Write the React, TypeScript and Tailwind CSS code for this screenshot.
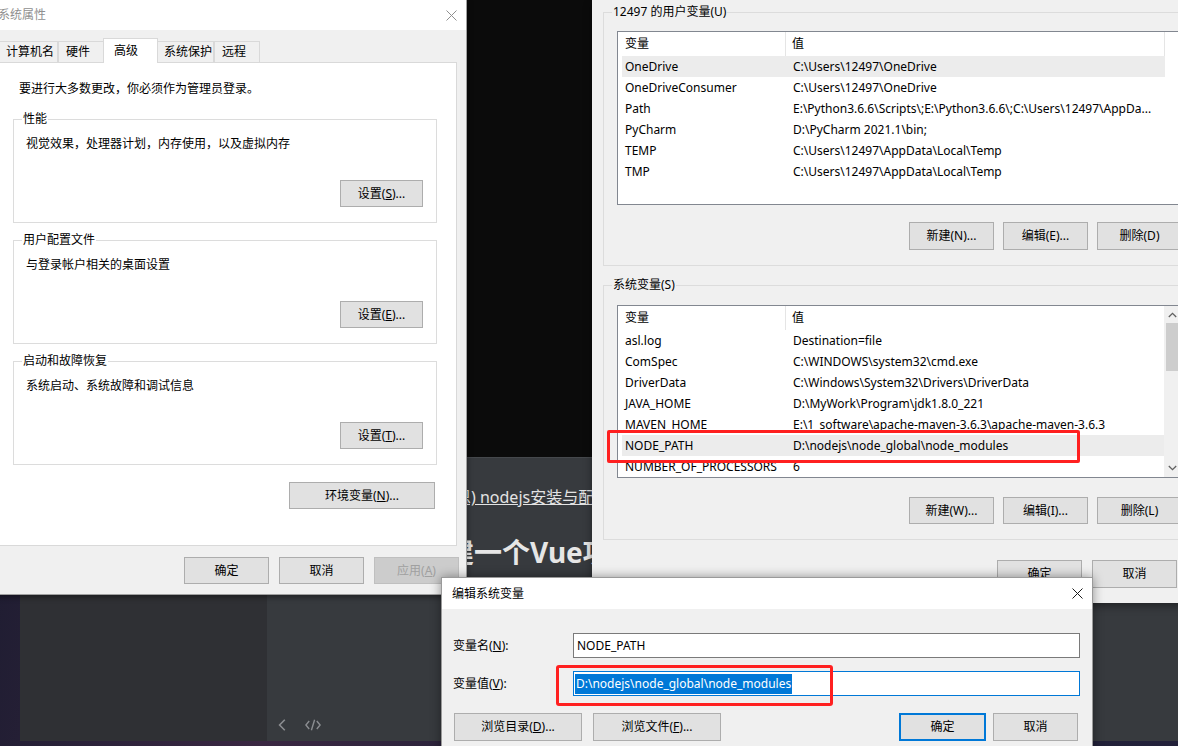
import type { ReactNode } from 'react';

const userVars: [string, string][] = [
  ['OneDrive', 'C:\\Users\\12497\\OneDrive'],
  ['OneDriveConsumer', 'C:\\Users\\12497\\OneDrive'],
  ['Path', 'E:\\Python3.6.6\\Scripts\\;E:\\Python3.6.6\\;C:\\Users\\12497\\AppDa...'],
  ['PyCharm', 'D:\\PyCharm 2021.1\\bin;'],
  ['TEMP', 'C:\\Users\\12497\\AppData\\Local\\Temp'],
  ['TMP', 'C:\\Users\\12497\\AppData\\Local\\Temp'],
];

const systemVars: [string, string][] = [
  ['asl.log', 'Destination=file'],
  ['ComSpec', 'C:\\WINDOWS\\system32\\cmd.exe'],
  ['DriverData', 'C:\\Windows\\System32\\Drivers\\DriverData'],
  ['JAVA_HOME', 'D:\\MyWork\\Program\\jdk1.8.0_221'],
  ['MAVEN_HOME', 'E:\\1_software\\apache-maven-3.6.3\\apache-maven-3.6.3'],
  ['NODE_PATH', 'D:\\nodejs\\node_global\\node_modules'],
  ['NUMBER_OF_PROCESSORS', '6'],
];

function CloseX({ color }: { color: string }) {
  return (
    <svg width="11" height="11" viewBox="0 0 11 11">
      <path d="M0.5 0.5L10.5 10.5M10.5 0.5L0.5 10.5" stroke={color} strokeWidth="1" />
    </svg>
  );
}

function Btn({
  children,
  className = '',
  variant = 'normal',
}: {
  children: ReactNode;
  className?: string;
  variant?: 'normal' | 'primary' | 'disabled';
}) {
  const look =
    variant === 'primary'
      ? 'border-2 border-[#0078d7] bg-[#e1e1e1] text-black'
      : variant === 'disabled'
        ? 'border border-[#bfbfbf] bg-[#cccccc] text-[#a0a0a0]'
        : 'border border-[#adadad] bg-[#e1e1e1] text-black';
  return (
    <div className={`flex shrink-0 items-center justify-center whitespace-nowrap ${look} ${className}`}>
      {children}
    </div>
  );
}

function GroupBox({
  label,
  labelBg,
  className = '',
  children,
}: {
  label: ReactNode;
  labelBg: string;
  className?: string;
  children?: ReactNode;
}) {
  return (
    <div className={`relative border border-[#dcdcdc] ${className}`}>
      <span className={`absolute left-[8px] top-[-9px] whitespace-nowrap px-[1px] leading-[16px] ${labelBg}`}>
        {label}
      </span>
      {children}
    </div>
  );
}

function VarList({
  rows,
  selected,
  scroll = false,
  className = '',
}: {
  rows: [string, string][];
  selected: number;
  scroll?: boolean;
  className?: string;
}) {
  return (
    <div className={`relative overflow-hidden border border-[#828790] bg-white ${className}`}>
      <div className="flex h-[24px] pl-[4px]">
        <div className="flex w-[164px] items-center border-r border-[#e5e5e5] pl-[3px]">变量</div>
        <div className="flex w-[379px] items-center border-r border-[#e5e5e5] pl-[6px]">值</div>
      </div>
      {rows.map(([name, value], i) => (
        <div
          key={name}
          className={`ml-[4px] flex h-[21px] w-[543px] items-center whitespace-nowrap ${
            i === selected ? 'bg-[#ececec]' : ''
          }`}
        >
          <div className="w-[164px] shrink-0 overflow-hidden pl-[3px]">{name}</div>
          <div className="pl-[7px]">{value}</div>
        </div>
      ))}
      {scroll && (
        <div className="absolute bottom-0 right-0 top-0 flex w-[16px] flex-col items-center bg-[#f0f0f0]">
          <svg className="mt-[6px]" width="9" height="6" viewBox="0 0 9 6">
            <path d="M0.8 5L4.5 1.3 8.2 5" fill="none" stroke="#606060" strokeWidth="1.3" />
          </svg>
          <div className="mt-[5px] h-[48px] w-[13px] bg-[#cdcdcd]" />
          <svg className="mt-auto mb-[6px]" width="9" height="6" viewBox="0 0 9 6">
            <path d="M0.8 1L4.5 4.7 8.2 1" fill="none" stroke="#606060" strokeWidth="1.3" />
          </svg>
        </div>
      )}
    </div>
  );
}

function Tab({ label, width, active = false }: { label: string; width: string; active?: boolean }) {
  if (active) {
    return (
      <div
        className={`relative top-[1px] z-10 -mx-[2px] flex h-[25px] items-center border-l border-r border-t border-[#d9d9d9] bg-white pl-[10px] ${width}`}
      >
        {label}
      </div>
    );
  }
  return (
    <div
      className={`flex h-[21px] items-center border-l border-r border-t border-[#d9d9d9] bg-[#f0f0f0] pl-[7px] ${width}`}
    >
      {label}
    </div>
  );
}

function PerfGroup({ label, text, button, className = '' }: { label: string; text: string; button: ReactNode; className?: string }) {
  return (
    <GroupBox label={label} labelBg="bg-white" className={`flex h-[104px] w-[424px] flex-col pl-[12px] pt-[16px] ${className}`}>
      <div className="h-[16px]">{text}</div>
      <Btn className="mr-[13px] mt-[28px] h-[27px] w-[83px] self-end">{button}</Btn>
    </GroupBox>
  );
}

export default function App() {
  return (
    <div className="relative h-[746px] w-[1178px] overflow-hidden bg-[linear-gradient(100deg,#171a2d_0%,#3a2742_30%,#1c1f33_60%,#23213a_100%)] font-['Noto_Sans','Noto_Sans_CJK_SC',sans-serif] text-[12px] leading-[16px] text-black">
      {/* browser page behind the dialogs */}
      <div className="absolute left-[20px] top-0 flex h-[741px] w-[1158px] flex-col">
        <div className="h-[458px] shrink-0 border-b border-[#45484c] bg-[#0b0b0b]" />
        <div className="flex flex-1">
          <div className="w-[247px] bg-[#2f3034]" />
          <div className="flex flex-1 flex-col bg-[#373a3e]">
            {/* only the strip between the two dialogs is visible */}
            <div className="ml-[200px] w-[125px] overflow-hidden">
              <div className="-ml-[12px] mt-[29px] whitespace-nowrap text-[16px] leading-[20px] text-[#e3e3e3] underline">
                恩) nodejs安装与配置
              </div>
              <div className="-ml-[21px] mt-[28px] whitespace-nowrap text-[28px] font-bold leading-[34px] text-[#e6e6e6]">
                建一个Vue项目
              </div>
            </div>
            <div className="mb-[10px] ml-[11px] mt-auto flex items-center gap-[19px]">
              <svg width="8" height="12" viewBox="0 0 8 12">
                <path d="M6.8 0.8L1.6 6l5.2 5.2" fill="none" stroke="#8b8d91" strokeWidth="1.6" />
              </svg>
              <svg width="16" height="12" viewBox="0 0 16 12">
                <path d="M4.2 2L0.9 6l3.3 4M11.8 2l3.3 4-3.3 4M9.6 0.8L6.4 11.2" fill="none" stroke="#8b8d91" strokeWidth="1.4" />
              </svg>
            </div>
          </div>
        </div>
      </div>

      {/* 系统属性 */}
      <div className="absolute left-[-12px] top-0 flex h-[595px] w-[479px] flex-col border-b border-r border-[#a0a0a0] bg-[#f0f0f0] shadow-[0_2px_6px_rgba(0,0,0,0.45)]">
        <div className="flex h-[30px] shrink-0 items-center justify-between bg-white pl-[10px] pr-[9px]">
          <span className="text-[#8f8f8f]">系统属性</span>
          <CloseX color="#8f8f8f" />
        </div>
        <div className="pl-[10px] pt-[8px]">
          <div className="flex h-[24px] items-end">
            <Tab label="计算机名" width="w-[60px]" />
            <Tab label="硬件" width="w-[47px]" />
            <Tab label="高级" width="w-[55px]" active />
            <Tab label="系统保护" width="w-[58px]" />
            <Tab label="远程" width="w-[46px]" />
          </div>
          <div className="flex h-[484px] w-[459px] flex-col border border-[#d9d9d9] bg-white pl-[14px] pt-[18px]">
            <div className="ml-[6px] h-[16px]">要进行大多数更改，你必须作为管理员登录。</div>
            <PerfGroup
              className="mt-[22px]"
              label="性能"
              text="视觉效果，处理器计划，内存使用，以及虚拟内存"
              button={<>设置(<u>S</u>)...</>}
            />
            <PerfGroup
              className="mt-[17px]"
              label="用户配置文件"
              text="与登录帐户相关的桌面设置"
              button={<>设置(<u>E</u>)...</>}
            />
            <PerfGroup
              className="mt-[17px]"
              label="启动和故障恢复"
              text="系统启动、系统故障和调试信息"
              button={<>设置(<u>T</u>)...</>}
            />
            <Btn className="mr-[21px] mt-[17px] h-[27px] w-[146px] self-end">
              环境变量(<u>N</u>)...
            </Btn>
          </div>
        </div>
        <div className="mt-[11px] flex justify-end gap-[10px] pr-[7px]">
          <Btn className="h-[27px] w-[85px]">确定</Btn>
          <Btn className="h-[27px] w-[85px]">取消</Btn>
          <Btn className="h-[27px] w-[85px]" variant="disabled">
            应用(<u>A</u>)
          </Btn>
        </div>
      </div>

      {/* 环境变量 */}
      <div className="absolute left-[592px] top-0 h-[603px] w-[620px] bg-[#f0f0f0] pl-[11px] pt-[12px] shadow-[0_3px_8px_rgba(0,0,0,0.4)]">
        <GroupBox label="12497 的用户变量(U)" labelBg="bg-[#f0f0f0]" className="h-[254px] w-[600px] pl-[13px] pt-[18px]">
          <VarList rows={userVars} selected={0} className="h-[174px] w-[564px]" />
          <div className="mt-[17px] flex w-[565px] justify-end gap-[9px]">
            <Btn className="h-[28px] w-[85px]">新建(N)...</Btn>
            <Btn className="h-[28px] w-[85px]">编辑(E)...</Btn>
            <Btn className="h-[28px] w-[85px]">删除(D)</Btn>
          </div>
        </GroupBox>
        <GroupBox label="系统变量(S)" labelBg="bg-[#f0f0f0]" className="mt-[19px] h-[255px] w-[600px] pl-[13px] pt-[19px]">
          <VarList rows={systemVars} selected={5} scroll className="h-[173px] w-[564px]" />
          <div className="mt-[19px] flex w-[565px] justify-end gap-[9px]">
            <Btn className="h-[27px] w-[85px]">新建(W)...</Btn>
            <Btn className="h-[27px] w-[85px]">编辑(I)...</Btn>
            <Btn className="h-[27px] w-[85px]">删除(L)</Btn>
          </div>
        </GroupBox>
        <div className="mt-[20px] flex w-[574px] justify-end gap-[10px]">
          <Btn className="h-[28px] w-[85px]">确定</Btn>
          <Btn className="h-[28px] w-[85px]">取消</Btn>
        </div>
      </div>

      {/* red annotation on the list */}
      <div className="absolute left-[607px] top-[430px] h-[33px] w-[473px] rounded-[2px] border-[3px] border-[#ff2020]" />

      {/* 编辑系统变量 */}
      <div className="absolute left-[441px] top-[577px] h-[190px] w-[652px] border border-[#9a9a9a] bg-[#f0f0f0] shadow-[0_0_10px_rgba(0,0,0,0.4)]">
        <div className="flex h-[31px] items-center justify-between bg-white pl-[10px] pr-[9px]">
          <span>编辑系统变量</span>
          <CloseX color="#1a1a1a" />
        </div>
        <div className="pl-[11px] pr-[12px] pt-[24px]">
          <div className="flex h-[25px] items-center">
            <div className="w-[120px]">
              变量名(<u>N</u>):
            </div>
            <div className="flex h-[25px] w-[507px] items-center border border-[#7a7a7a] bg-white pl-[3px]">NODE_PATH</div>
          </div>
          <div className="mt-[13px] flex h-[25px] items-center">
            <div className="w-[120px]">
              变量值(<u>V</u>):
            </div>
            <div className="flex h-[25px] w-[507px] items-center border border-[#0078d7] bg-white pl-[1px]">
              <span className="whitespace-nowrap bg-[#0078d7] px-[1px] leading-[20px] text-white">
                {'D:\\nodejs\\node_global\\node_modules'}
              </span>
            </div>
          </div>
          <div className="mt-[17px] flex pr-[2px]">
            <Btn className="ml-[1px] h-[28px] w-[128px]">
              浏览目录(<u>D</u>)...
            </Btn>
            <Btn className="ml-[11px] h-[28px] w-[128px]">
              浏览文件(<u>F</u>)...
            </Btn>
            <Btn className="ml-auto h-[28px] w-[87px]" variant="primary">
              确定
            </Btn>
            <Btn className="ml-[7px] h-[28px] w-[85px]">取消</Btn>
          </div>
        </div>
      </div>

      {/* red annotation on the value field */}
      <div className="absolute left-[556px] top-[665px] h-[41px] w-[277px] rounded-[3px] border-[3px] border-[#ff2020]" />
    </div>
  );
}
